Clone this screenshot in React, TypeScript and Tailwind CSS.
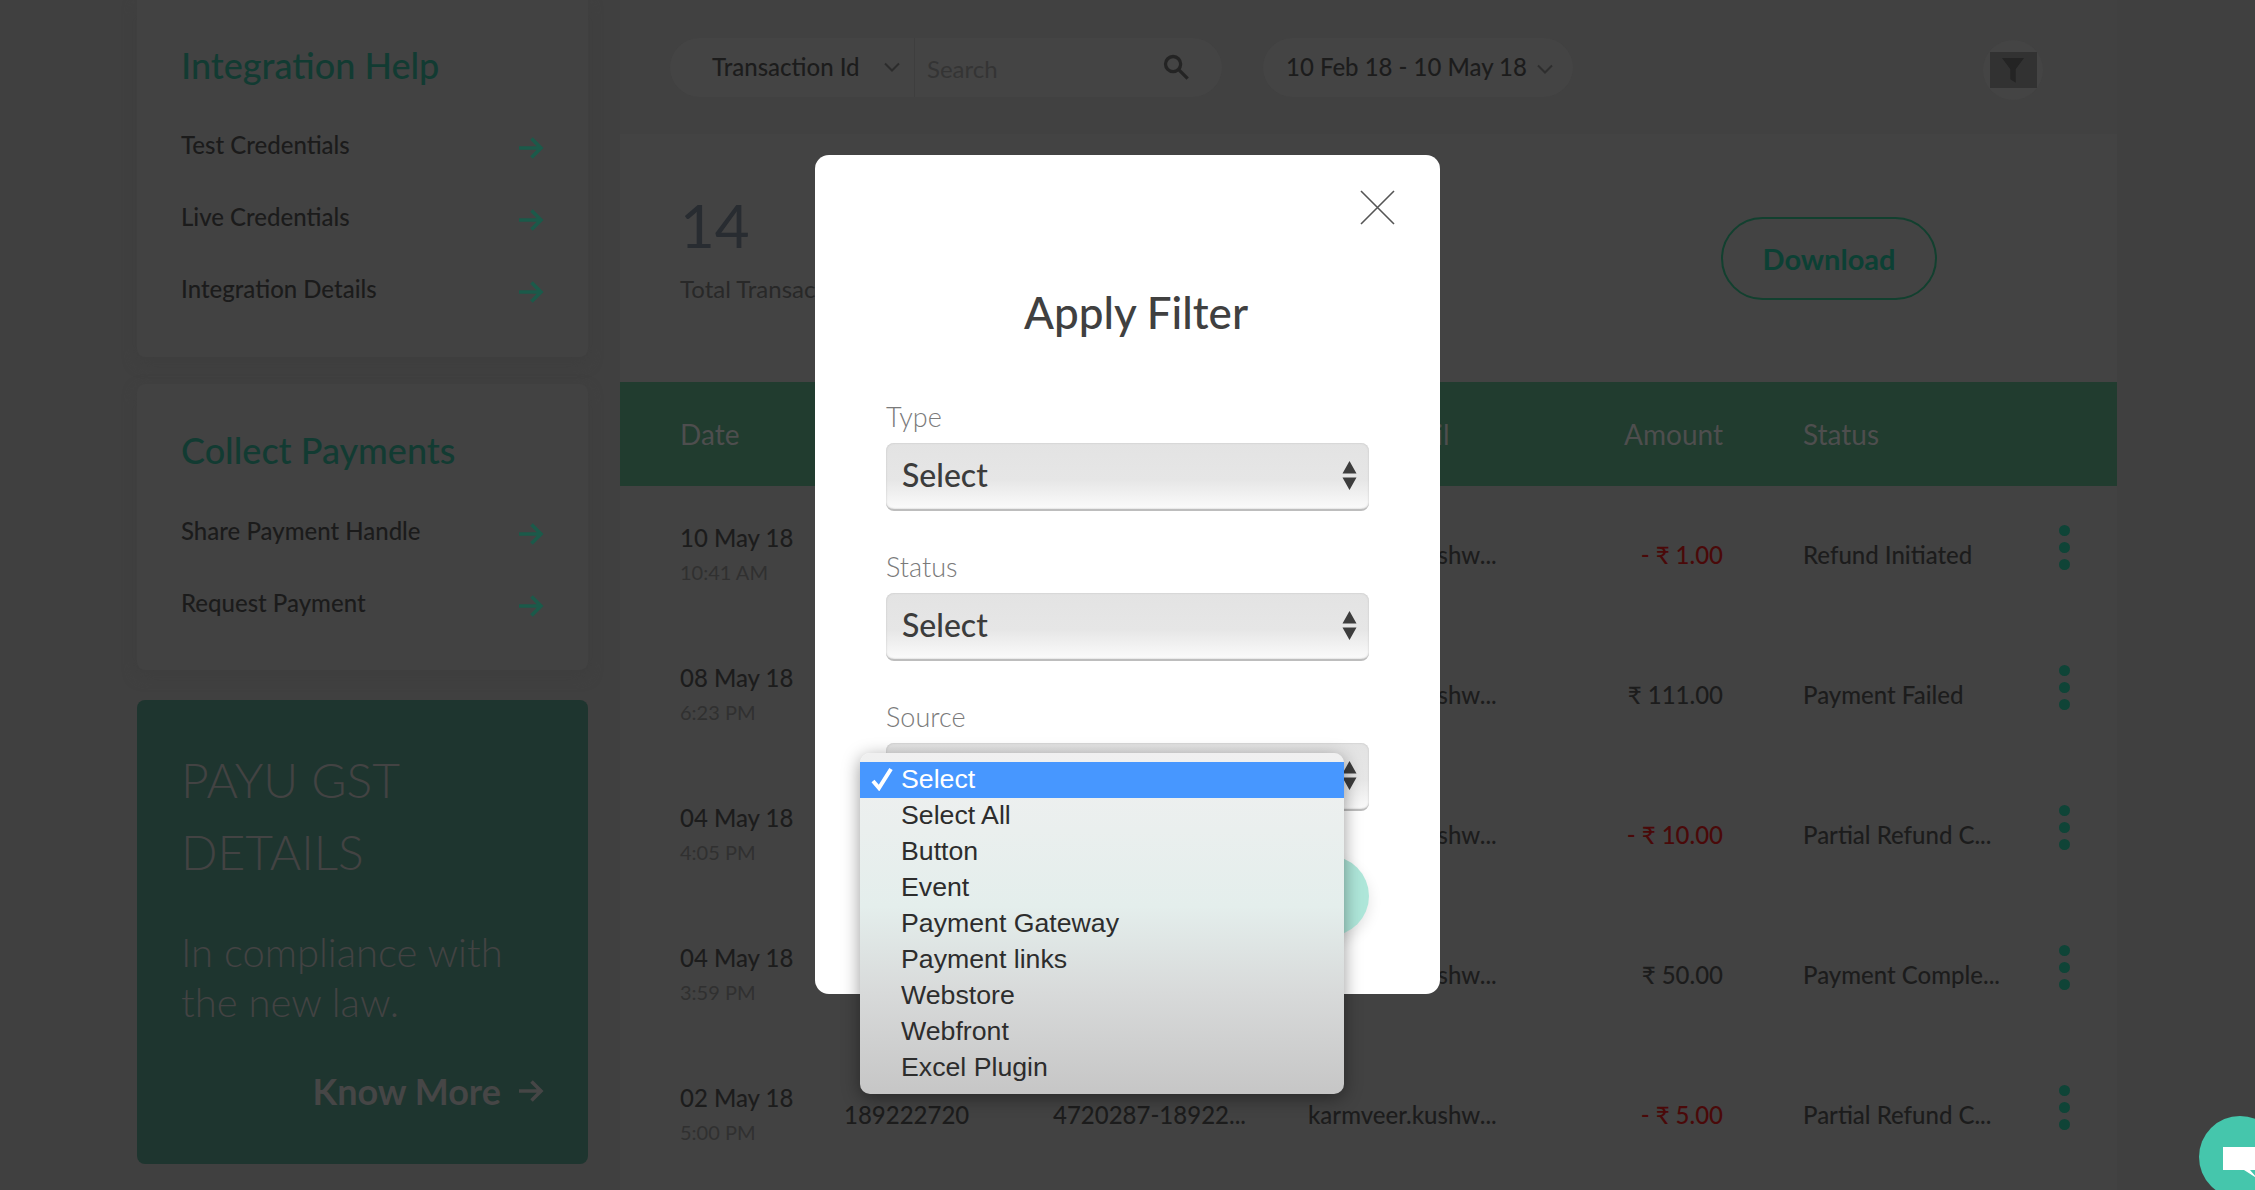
import React from "react";

const rows = [
  ["10 May 18", "10:41 AM", "189222801", "4720287-18923...", "- ₹ 1.00", "Refund Initiated", true],
  ["08 May 18", "6:23 PM", "189222790", "4720287-18922...", "₹ 111.00", "Payment Failed", false],
  ["04 May 18", "4:05 PM", "189222760", "4720287-18922...", "- ₹ 10.00", "Partial Refund C...", true],
  ["04 May 18", "3:59 PM", "189222740", "4720287-18922...", "₹ 50.00", "Payment Comple...", false],
  ["02 May 18", "5:00 PM", "189222720", "4720287-18922...", "- ₹ 5.00", "Partial Refund C...", true],
] as const;

const options = ["Select All", "Button", "Event", "Payment Gateway", "Payment links", "Webstore", "Webfront", "Excel Plugin"];

function Arrow({ color = "#1b5a4a" }: { color?: string }) {
  return (
    <svg width="26" height="24" viewBox="0 0 26 24" fill="none" stroke={color} strokeWidth="3.6">
      <path d="M1 12h22M13.5 2.5 23 12l-9.5 9.5" />
    </svg>
  );
}

function SideLink({ label }: { label: string }) {
  return (
    <div className="flex h-[72px] items-center justify-between pr-[44px] text-[24px] font-medium text-[#1b1b1b]">
      <span>{label}</span>
      <span className="mt-[6px] flex"><Arrow /></span>
    </div>
  );
}

function Chevron({ color = "#2c2c2c" }: { color?: string }) {
  return (
    <svg width="16" height="10" viewBox="0 0 16 10" fill="none" stroke={color} strokeWidth="2">
      <path d="M1 1.5 8 8.5l7-7" />
    </svg>
  );
}

function Updown() {
  return (
    <svg width="15" height="30" viewBox="0 0 15 30" fill="#3d3d3d">
      <path d="M7.5 0 14.5 12.5H.5zM.5 16.5h14L7.5 29z" />
    </svg>
  );
}

function NativeSelect({ label, text = "Select" }: { label: string; text?: string }) {
  return (
    <div className="flex flex-col">
      <div className="flex h-[44px] items-center pb-[9px] text-[27px] font-light leading-none text-[#7a7a7a]">{label}</div>
      <div className="flex h-[68px] items-center justify-between rounded-[8px] border-b-2 border-b-[#bdbdbd] bg-[linear-gradient(#e3e3e3_0%,#e6e6e6_55%,#fbfbfb_100%)] pl-[16px] pr-[12px] shadow-[inset_0_0_2px_#bbbbbb]">
        <span className="pb-[2px] text-[32px] font-medium leading-none text-[#3c3c3c]">{text}</span>
        <Updown />
      </div>
    </div>
  );
}

export default function App() {
  return (
    <div className="relative flex h-[1190px] w-[2255px] overflow-hidden bg-[#404040] pl-[137px] font-['Lato','Open_Sans',sans-serif]">
      <aside className="flex w-[451px] shrink-0 flex-col">
        <section className="h-[357px] rounded-b-[8px] bg-[#424242] pl-[44px] pt-[37px] shadow-[0_6px_14px_#3e3e3e]">
          <h2 className="mb-[16px] text-[36px] font-medium leading-[56px] text-[#123b32]">Integration Help</h2>
          <SideLink label="Test Credentials" />
          <SideLink label="Live Credentials" />
          <SideLink label="Integration Details" />
        </section>
        <section className="mt-[27px] h-[286px] rounded-[8px] bg-[#424242] pl-[44px] pt-[38px] shadow-[0_6px_14px_#3e3e3e]">
          <h2 className="mb-[17px] text-[36px] font-medium leading-[56px] text-[#123b32]">Collect Payments</h2>
          <SideLink label="Share Payment Handle" />
          <SideLink label="Request Payment" />
        </section>
        <section className="mt-[30px] flex h-[464px] flex-col rounded-[8px] bg-[#1e352f] pl-[44px] pr-[44px] pt-[44px]">
          <h3 className="text-[48px] font-light leading-[72px] text-[#434343]">PAYU GST<br />DETAILS</h3>
          <p className="mt-[39px] text-[40px] font-light leading-[50px] text-[#434343]">In compliance with<br />the new law.</p>
          <div className="mt-[46px] flex items-center justify-end gap-[17px] text-[36px] font-bold leading-none text-[#464646]">
            <span>Know More</span>
            <Arrow color="#464646" />
          </div>
        </section>
      </aside>

      <main className="ml-[32px] flex w-[1497px] shrink-0 flex-col bg-[#424242]">
        <div className="flex h-[134px] items-center bg-[#414141] pl-[50px] pr-[81px]">
          <div className="flex h-[59px] w-[552px] items-center rounded-full bg-[#444444] pl-[42px] pr-[32px] text-[24px] font-medium text-[#1c1c1c]">
            <span className="w-[172px]">Transaction Id</span>
            <Chevron />
            <div className="ml-[14px] mr-[10px] h-full w-px bg-[#3e3e3e]" />
            <span className="flex-1 pl-[2px] pt-[4px] text-[24px] font-normal text-[#343434]">Search</span>
            <svg width="28" height="28" viewBox="0 0 24 24" fill="none" stroke="#242424" strokeWidth="2.8">
              <circle cx="9.5" cy="9.5" r="6.5" />
              <path d="m14.5 14.5 7.5 7.5" />
            </svg>
          </div>
          <div className="ml-[41px] flex h-[59px] w-[310px] items-center rounded-full bg-[#444444] pl-[23px] text-[24px] font-medium text-[#1c1c1c]">
            <span>10 Feb 18 - 10 May 18</span>
            <span className="ml-[10px] mt-[4px] flex"><Chevron color="#2e2e2e" /></span>
          </div>
          <div className="relative ml-auto mr-[-7px] mt-[6px] flex h-[60px] w-[60px] items-center justify-center rounded-full bg-[#444444]">
            <div className="flex h-[36px] w-[47px] items-center justify-center bg-[#323232]">
              <svg width="22" height="28" viewBox="0 0 24 30" fill="#242424">
                <path d="M0 2h24L15 14v15l-6-4V14z" />
              </svg>
            </div>
          </div>
        </div>

        <div className="flex h-[248px] bg-[#434343] pl-[60px]">
          <div className="w-[420px] pt-[51px]">
            <div className="text-[60px] leading-[80px] text-[#282c31]">14</div>
            <div className="mt-[9px] text-[24px] leading-[30px] text-[#282828]">Total Transactions</div>
          </div>
          <div className="w-[460px] pt-[51px]">
            <div className="text-[60px] leading-[80px] text-[#282c31]">₹ 127.00</div>
            <div className="mt-[9px] text-[24px] leading-[30px] text-[#282828]">Total Amount Debited</div>
          </div>
          <div className="ml-[161px] mt-[83px] flex h-[83px] w-[216px] items-center justify-center rounded-full border-2 border-[#12402f] text-[29px] font-bold text-[#0c4034]">
            Download
          </div>
        </div>

        <div className="flex h-[104px] items-center bg-[#213c2f] pl-[60px] text-[28px] text-[#4e4e4e]">
          <span className="w-[164px]">Date</span>
          <span className="w-[209px]">Order Id</span>
          <span className="w-[255px]">Transaction Id</span>
          <span className="w-[160px] whitespace-nowrap">Payer Email</span>
          <span className="w-[255px] text-right">Amount</span>
          <span className="ml-[80px]">Status</span>
        </div>

        {rows.map((r, i) => (
          <div key={i} className="flex h-[140px] shrink-0 items-center pb-[2px] pl-[60px] text-[24px] font-medium text-[#1c1c1c]">
            <div className="w-[164px]">
              <div className="leading-[34px]">{r[0]}</div>
              <div className="text-[20px] font-normal leading-[34px] text-[#303030]">{r[1]}</div>
            </div>
            <span className="w-[209px]">{r[2]}</span>
            <span className="w-[255px]">{r[3]}</span>
            <span className="w-[255px]">karmveer.kushw...</span>
            <span className={`w-[160px] text-right ${r[6] ? "text-[#4a0909]" : ""}`}>{r[4]}</span>
            <span className="ml-[80px] w-[261px]">{r[5]}</span>
            <div className="-ml-[5px] -mt-[16px] flex flex-col gap-[6px]">
              <span className="h-[11px] w-[11px] rounded-full bg-[#0f4437]" />
              <span className="h-[11px] w-[11px] rounded-full bg-[#0f4437]" />
              <span className="h-[11px] w-[11px] rounded-full bg-[#0f4437]" />
            </div>
          </div>
        ))}
      </main>

      <div className="absolute left-[815px] top-[155px] h-[839px] w-[625px] rounded-[14px] bg-white pl-[71px] pr-[71px]">
        <svg className="absolute left-[545px] top-[35px]" width="35" height="35" viewBox="0 0 35 35" stroke="#555555" strokeWidth="1.6">
          <path d="M1 1l33 33M34 1 1 34" />
        </svg>
        <h1 className="ml-[138px] mt-[128px] w-max text-[44px] font-medium leading-[58px] text-[#404040]">Apply Filter</h1>
        <div className="mt-[58px] flex flex-col gap-[38px]">
          <NativeSelect label="Type" />
          <NativeSelect label="Status" />
          <NativeSelect label="Source" text="" />
        </div>
        <div className="mt-[45px] flex h-[80px] items-center justify-center rounded-full bg-[#aee6d9] text-[28px] text-white shadow-[0_6px_14px_#e3e3e3]">Apply</div>
      </div>

      <div className="absolute left-[860px] top-[753px] flex h-[341px] w-[484px] flex-col rounded-[10px] bg-[linear-gradient(#f0f0f0_0%,#e4eeec_45%,#d8dada_70%,#c6c6c6_100%)] pt-[9px] font-['Liberation_Sans',sans-serif] text-[26.7px] leading-none text-[#2d2d2d] shadow-[0_4px_18px_rgba(0,0,0,0.4)]">
        <div className="relative flex h-[36px] shrink-0 items-center bg-[#4797ff] pb-[2px] pl-[41px] text-white">
          <svg className="absolute left-[11px] top-[5px]" width="23" height="24" viewBox="0 0 23 24" fill="none" stroke="#ffffff" strokeWidth="4">
            <path d="M2 14l6 7L20 2" />
          </svg>
          Select
        </div>
        {options.map((o) => (
          <div key={o} className="flex h-[36px] shrink-0 items-center pb-[2px] pl-[41px]">{o}</div>
        ))}
      </div>

      <div className="absolute left-[2199px] top-[1116px] h-[82px] w-[82px] rounded-full bg-[#45c6ac]">
        <svg className="absolute left-[21px] top-[31px]" width="50" height="36" viewBox="0 0 50 36" fill="#ffffff">
          <path d="M3 0h44v23H32l-2 0 8 9-14-9H3z" />
        </svg>
      </div>
    </div>
  );
}
